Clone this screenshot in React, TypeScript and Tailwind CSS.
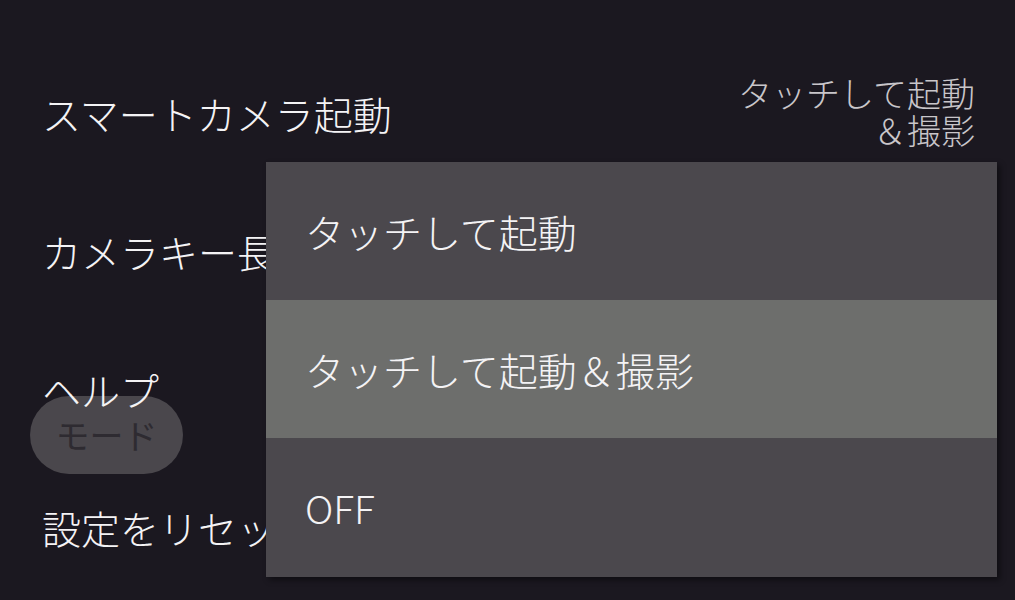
import React from "react";

const font = { fontFamily: '"Noto Sans CJK JP", "Noto Sans", sans-serif' };

export default function App() {
  return (
    <div
      className="relative w-[1015px] h-[600px] overflow-hidden bg-[#1b1820] text-[#f4f3f5] font-light"
      style={font}
    >
      <div className="flex flex-col pt-[44px]">
        <div className="h-[138px] flex items-center justify-between pl-[42px] pr-[40px]">
          <span className="text-[39px] leading-none">スマートカメラ起動</span>
          <div className="flex flex-col items-end text-[34px] leading-[37px] text-[#c9c6ca] -mt-[4px]">
            <span>タッチして起動</span>
            <span>＆撮影</span>
          </div>
        </div>
        <div className="h-[138px] flex items-center pl-[42px]">
          <span className="text-[39px] leading-none">カメラキー長押し</span>
        </div>
        <div className="h-[138px] flex items-center pl-[42px]">
          <span className="relative z-10 text-[39px] leading-none">ヘルプ</span>
        </div>
        <div className="h-[138px] flex items-center pl-[42px]">
          <span className="text-[39px] leading-none">設定をリセット</span>
        </div>
      </div>

      <div className="absolute left-[30px] top-[396px] w-[153px] h-[78px] rounded-full bg-[#4a474c] flex items-center justify-center">
        <span className="text-[34px] leading-none font-normal text-[#2e2b31]">モード</span>
      </div>

      <div className="absolute z-20 left-[266px] top-[162px] w-[731px] flex flex-col shadow-[3px_3px_6px_rgba(0,0,0,0.45)]">
        <div className="h-[138px] bg-[#4b484d] flex items-center pl-[39px]">
          <span className="text-[39px] leading-none">タッチして起動</span>
        </div>
        <div className="h-[138px] bg-[#6d6e6c] flex items-center pl-[39px]">
          <span className="text-[39px] leading-none">タッチして起動＆撮影</span>
        </div>
        <div className="h-[139px] bg-[#4b484d] flex items-center pl-[39px]">
          <span className="text-[39px] leading-none">OFF</span>
        </div>
      </div>
    </div>
  );
}
